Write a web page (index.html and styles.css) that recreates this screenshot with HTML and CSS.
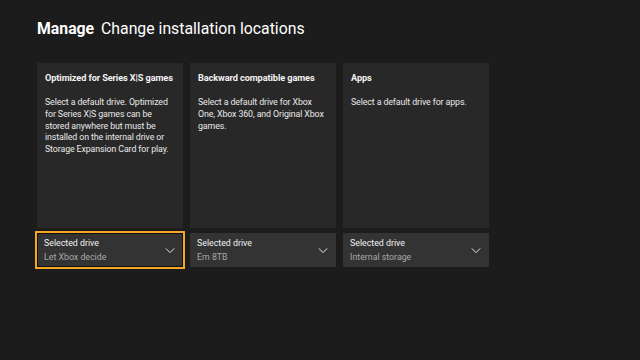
FILE: index.html
```html
<!DOCTYPE html>
<html lang="en">
<head>
    <meta charset="UTF-8">
    <title>Manage - Change installation locations</title>
    <link rel="stylesheet" href="styles.css">
</head>
<body>
    <div class="page">
        <h1 class="title"><span class="title-strong">Manage</span> Change installation locations</h1>

        <div class="columns">
            <div class="column">
                <div class="card">
                    <div class="card-title">Optimized for Series X|S games</div>
                    <p class="card-text">Select a default drive. Optimized for Series X|S games can be stored anywhere but must be installed on the internal drive or Storage Expansion Card for play.</p>
                </div>
                <button class="drive focused">
                    <span class="drive-label">
                        <span class="drive-name">Selected drive</span>
                        <span class="drive-value">Let Xbox decide</span>
                    </span>
                    <svg class="chevron" viewBox="0 0 12 8" width="10" height="7"><path d="M1 1.5 L6 6.5 L11 1.5" fill="none" stroke="#e6e6e6" stroke-width="1.2"/></svg>
                </button>
            </div>

            <div class="column">
                <div class="card">
                    <div class="card-title">Backward compatible games</div>
                    <p class="card-text">Select a default drive for Xbox One, Xbox 360, and Original Xbox games.</p>
                </div>
                <button class="drive">
                    <span class="drive-label">
                        <span class="drive-name">Selected drive</span>
                        <span class="drive-value">Em 8TB</span>
                    </span>
                    <svg class="chevron" viewBox="0 0 12 8" width="10" height="7"><path d="M1 1.5 L6 6.5 L11 1.5" fill="none" stroke="#e6e6e6" stroke-width="1.2"/></svg>
                </button>
            </div>

            <div class="column">
                <div class="card">
                    <div class="card-title">Apps</div>
                    <p class="card-text">Select a default drive for apps.</p>
                </div>
                <button class="drive">
                    <span class="drive-label">
                        <span class="drive-name">Selected drive</span>
                        <span class="drive-value">Internal storage</span>
                    </span>
                    <svg class="chevron" viewBox="0 0 12 8" width="10" height="7"><path d="M1 1.5 L6 6.5 L11 1.5" fill="none" stroke="#e6e6e6" stroke-width="1.2"/></svg>
                </button>
            </div>
        </div>
    </div>
</body>
</html>
```

FILE: styles.css
```css
:root {
    --background: #1c1c1c;
    --surface: #282828;
    --control: #333333;
    --text: #f2f2f2;
    --text-secondary: #a8a8a8;
    --focus: #f5a623;
}

* {
    margin: 0;
    padding: 0;
    box-sizing: border-box;
}

html, body {
    height: 100%;
}

body {
    font-family: Roboto, 'Noto Sans', sans-serif;
    background-color: var(--background);
    color: var(--text);
}

.page {
    padding: 18px 0 0 37px;
}

.title {
    font-size: 15.8px;
    font-weight: 400;
    line-height: 22px;
    color: #ffffff;
}

.title-strong {
    font-weight: 700;
    margin-right: 3px;
}

.columns {
    display: flex;
    gap: 7px;
    margin-top: 23px;
}

.column {
    width: 146px;
    display: flex;
    flex-direction: column;
    gap: 5px;
}

.card {
    height: 165px;
    background-color: var(--surface);
    padding: 8px 9px 8px 8px;
}

.card-title {
    font-size: 9.2px;
    font-weight: 700;
    line-height: 13px;
    letter-spacing: -0.1px;
    white-space: nowrap;
}

.card-text {
    font-size: 8.8px;
    line-height: 11.8px;
    margin-top: 13px;
    color: #e8e8e8;
    letter-spacing: -0.1px;
}

.drive {
    height: 34px;
    display: flex;
    align-items: center;
    justify-content: space-between;
    background-color: var(--control);
    border: none;
    padding: 0 8px 0 7px;
    font-family: inherit;
    color: var(--text);
    text-align: left;
}

.drive.focused {
    outline: 2px solid var(--focus);
    outline-offset: 0;
    box-shadow: inset 0 0 0 1px #111;
}

.drive-label {
    display: flex;
    flex-direction: column;
}

.drive-name {
    font-size: 8.8px;
    line-height: 14px;
}

.drive-value {
    font-size: 8.8px;
    line-height: 14px;
    color: var(--text-secondary);
}

.chevron {
    flex-shrink: 0;
}
```
